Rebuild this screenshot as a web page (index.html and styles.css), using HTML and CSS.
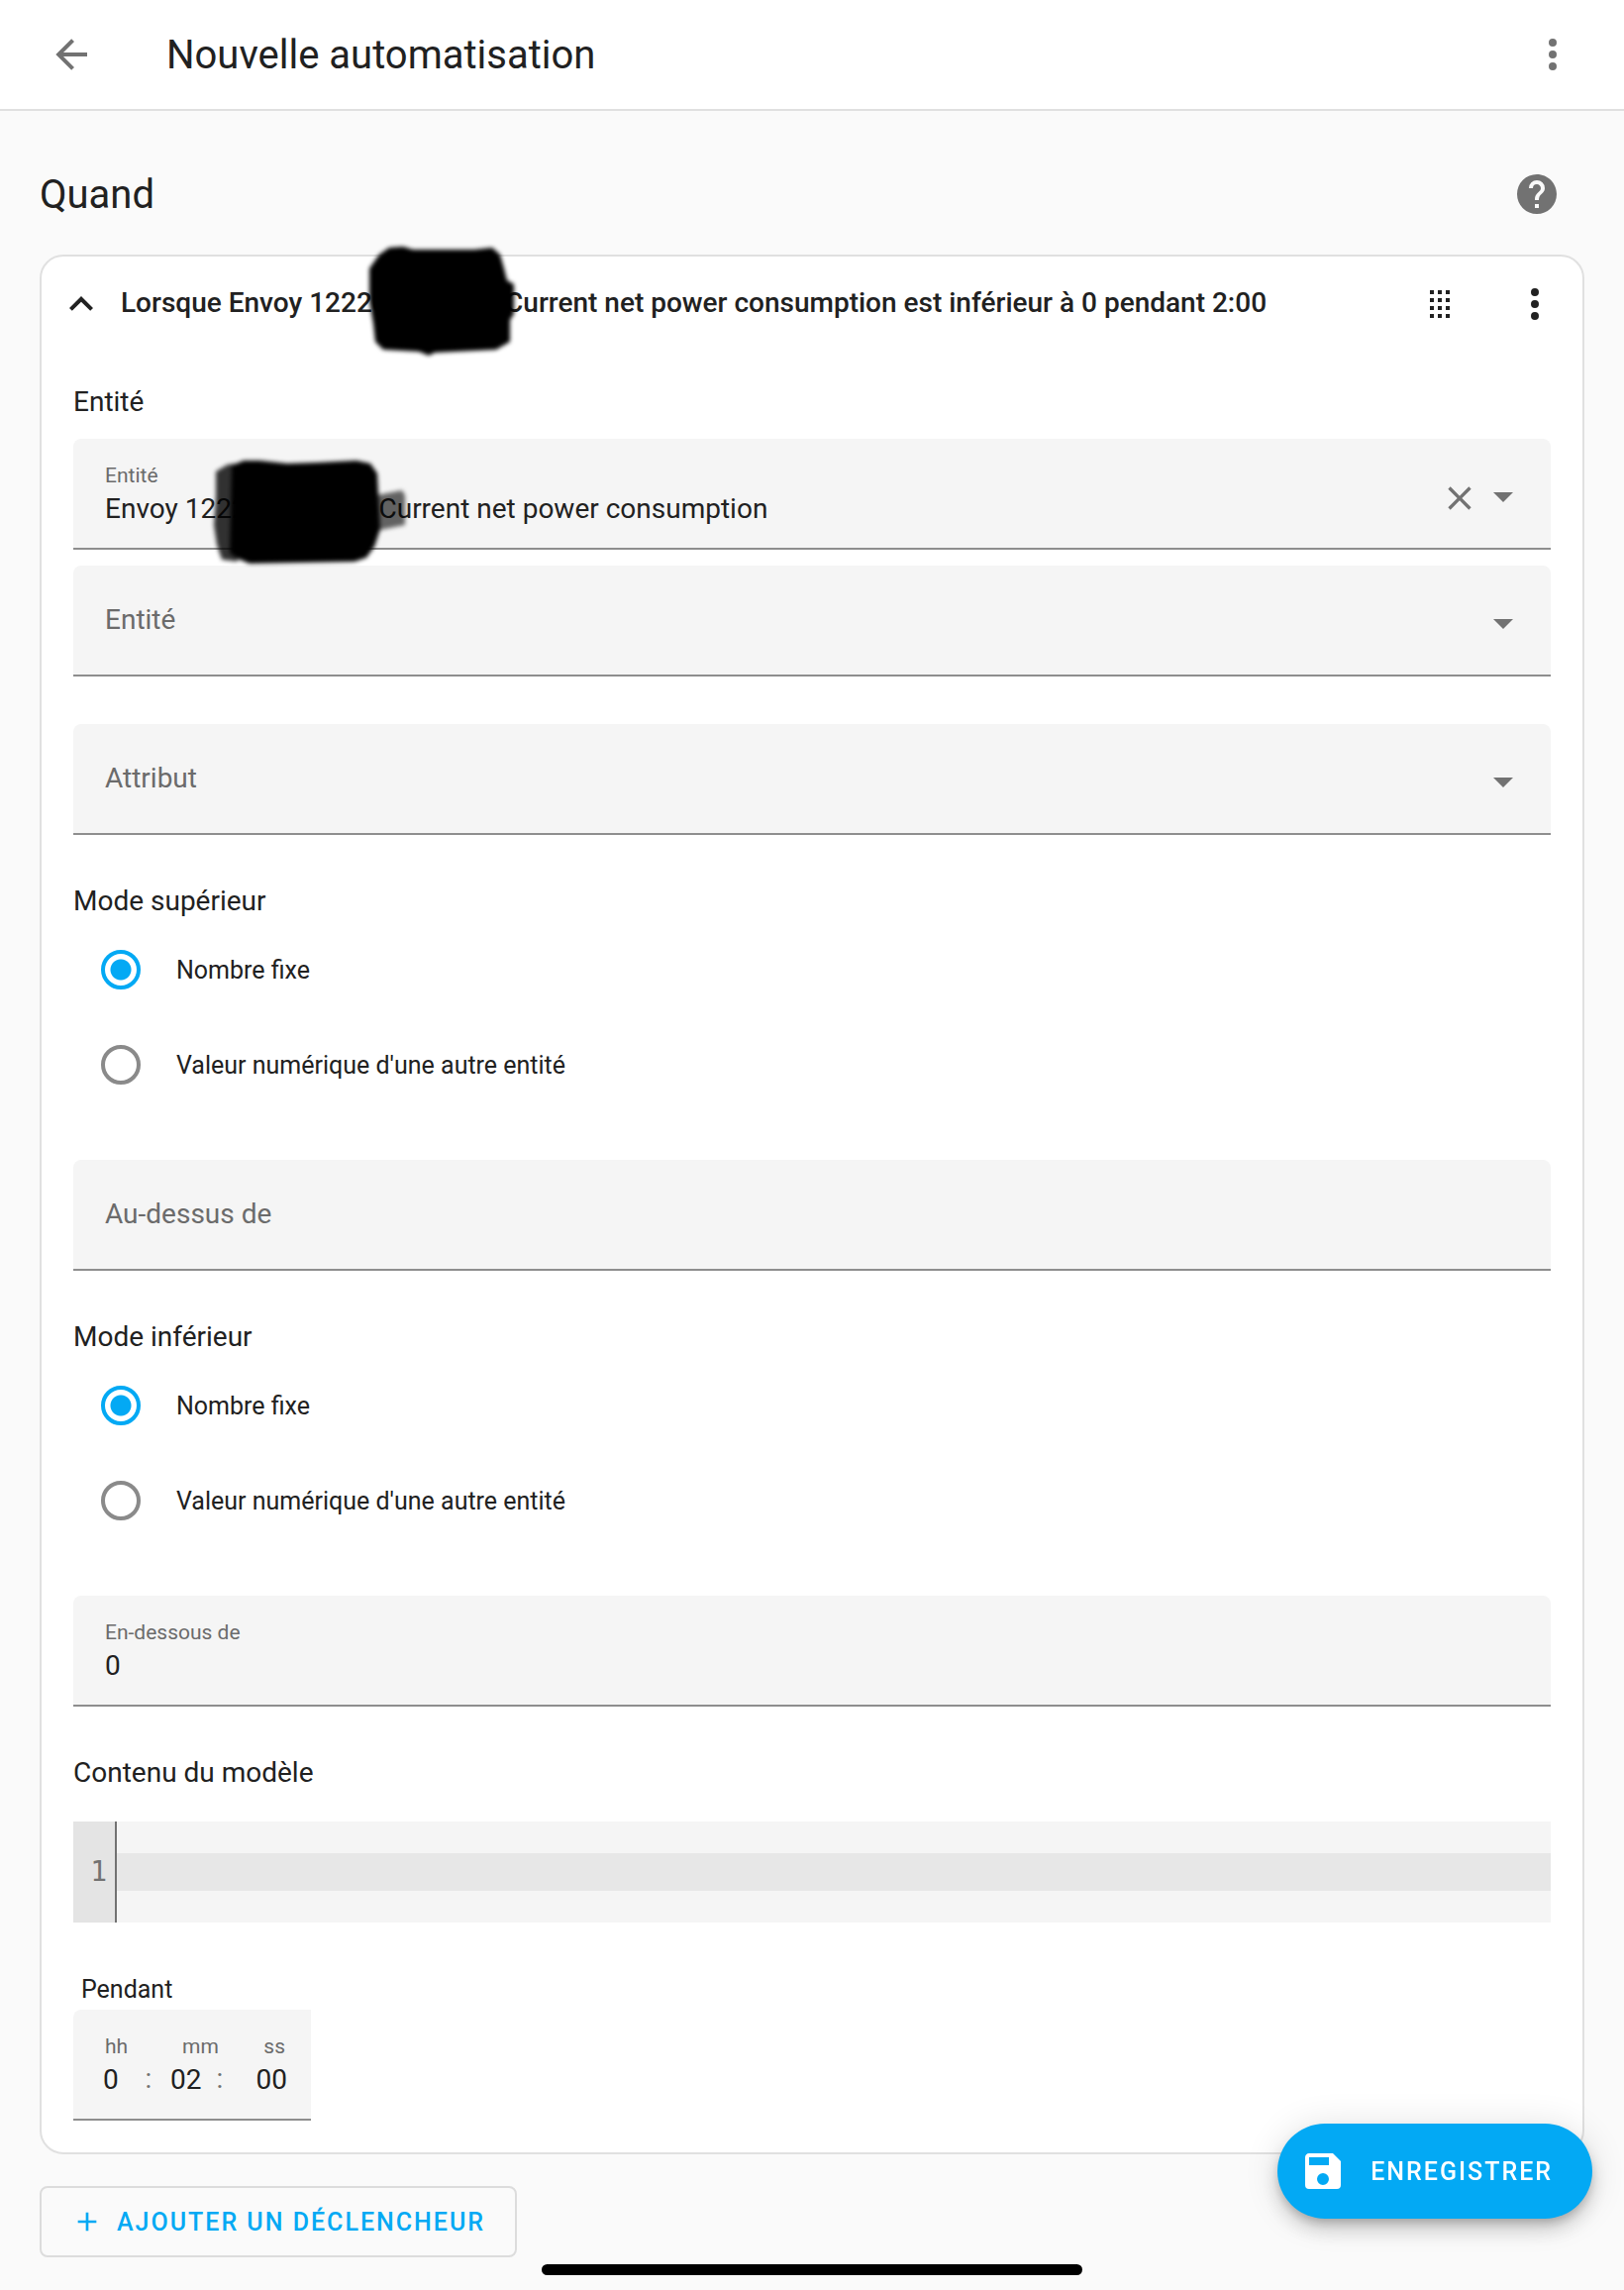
FILE: index.html
```html
<!DOCTYPE html>
<html lang="fr">

<head>
    <meta charset="UTF-8">
    <meta name="viewport" content="width=device-width, initial-scale=1.0">
    <title>Nouvelle automatisation</title>
    <link rel="stylesheet" href="styles.css">
</head>

<body>
    <header class="toolbar">
        <button class="icon-button" type="button" aria-label="Retour">
            <svg class="icon" viewBox="0 0 24 24"><path d="M20,11V13H8L13.5,18.5L12.08,19.92L4.16,12L12.08,4.08L13.5,5.5L8,11H20Z"/></svg>
        </button>
        <h1 class="toolbar-title">Nouvelle automatisation</h1>
        <button class="icon-button" type="button" aria-label="Menu">
            <svg class="icon" viewBox="0 0 24 24"><path d="M12,16A2,2 0 0,1 14,18A2,2 0 0,1 12,20A2,2 0 0,1 10,18A2,2 0 0,1 12,16M12,10A2,2 0 0,1 14,12A2,2 0 0,1 12,14A2,2 0 0,1 10,12A2,2 0 0,1 12,10M12,4A2,2 0 0,1 14,6A2,2 0 0,1 12,8A2,2 0 0,1 10,6A2,2 0 0,1 12,4Z"/></svg>
        </button>
    </header>

    <main class="content">
        <div class="section-header">
            <h2>Quand</h2>
            <button class="icon-button" type="button" aria-label="Aide">
                <svg class="icon" viewBox="0 0 24 24"><path d="M15.07,11.25L14.17,12.17C13.45,12.89 13,13.5 13,15H11V14.5C11,13.39 11.45,12.39 12.17,11.67L13.41,10.41C13.78,10.05 14,9.55 14,9C14,7.89 13.1,7 12,7A2,2 0 0,0 10,9H8A4,4 0 0,1 12,5A4,4 0 0,1 16,9C16,9.88 15.64,10.67 15.07,11.25M13,19H11V17H13M12,2A10,10 0 0,0 2,12A10,10 0 0,0 12,22A10,10 0 0,0 22,12C22,6.47 17.5,2 12,2Z"/></svg>
            </button>
        </div>

        <section class="card">
            <div class="card-header">
                <button class="icon-button" type="button" aria-label="Réduire">
                    <svg class="icon" viewBox="0 0 24 24"><path d="M7.41,15.41L12,10.83L16.59,15.41L18,14L12,8L6,14L7.41,15.41Z"/></svg>
                </button>
                <h3>Lorsque Envoy 1222<span class="masked">00000000<svg class="scribble scribble-title" viewBox="0 0 200 130"><path d="M44,13L58,12L68,15L130,15L148,13L156,20L160,34L163,46L170,50L170,80L166,86L166,108L152,116L90,119L84,122L74,118L38,116L30,108L28,90L24,66L24,34L34,20Z"/></svg></span> Current net power consumption est inférieur à 0 pendant 2:00</h3>
                <button class="icon-button" type="button" aria-label="Déplacer">
                    <svg class="icon" viewBox="0 0 24 24"><path d="M7,19V17H9V19H7M11,19V17H13V19H11M15,19V17H17V19H15M7,15V13H9V15H7M11,15V13H13V15H11M15,15V13H17V15H15M7,11V9H9V11H7M11,11V9H13V11H11M15,11V9H17V11H15M7,7V5H9V7H7M11,7V5H13V7H11M15,7V5H17V7H15Z"/></svg>
                </button>
                <button class="icon-button" type="button" aria-label="Actions">
                    <svg class="icon" viewBox="0 0 24 24"><path d="M12,16A2,2 0 0,1 14,18A2,2 0 0,1 12,20A2,2 0 0,1 10,18A2,2 0 0,1 12,16M12,10A2,2 0 0,1 14,12A2,2 0 0,1 12,14A2,2 0 0,1 10,12A2,2 0 0,1 12,10M12,4A2,2 0 0,1 14,6A2,2 0 0,1 12,8A2,2 0 0,1 10,6A2,2 0 0,1 12,4Z"/></svg>
                </button>
            </div>

            <form class="card-body" id="trigger-form">
                <div class="entities" role="group" aria-labelledby="entities-label">
                    <p class="group-label" id="entities-label">Entité</p>
                    <div class="field">
                        <label for="entity">Entité</label>
                        <select id="entity">
                            <option>Envoy 122200000000 Current net power consumption</option>
                        </select>
                        <svg class="scribble scribble-field" viewBox="0 0 220 130"><path class="faint" d="M180,50L206,45L209,50L209,80L184,85Z"/><path class="soft" d="M18,26L30,19L40,18L40,117L24,115L19,100L16,80L18,52Z"/><path d="M34,20L46,15L62,15L90,18L120,17L160,15L174,18L181,28L182,48L184,84L178,102L170,113L158,117L52,119L40,114L32,108Z"/></svg>
                        <div class="field-icons">
                            <button class="clear" type="button" aria-label="Effacer">
                                <svg viewBox="0 0 24 24"><path d="M19,6.41L17.59,5L12,10.59L6.41,5L5,6.41L10.59,12L5,17.59L6.41,19L12,13.41L17.59,19L19,17.59L13.41,12L19,6.41Z"/></svg>
                            </button>
                            <svg class="icon" viewBox="0 0 24 24"><path d="M7,10L12,15L17,10H7Z"/></svg>
                        </div>
                    </div>
                    <div class="field empty">
                        <select aria-label="Entité">
                            <option>Entité</option>
                        </select>
                        <div class="field-icons">
                            <svg class="icon" viewBox="0 0 24 24"><path d="M7,10L12,15L17,10H7Z"/></svg>
                        </div>
                    </div>
                </div>

                <div class="field empty">
                    <select aria-label="Attribut">
                        <option>Attribut</option>
                    </select>
                    <div class="field-icons">
                        <svg class="icon" viewBox="0 0 24 24"><path d="M7,10L12,15L17,10H7Z"/></svg>
                    </div>
                </div>

                <div role="radiogroup" aria-labelledby="above-label">
                    <p class="group-label" id="above-label">Mode supérieur</p>
                    <div class="radios">
                        <label class="radio"><input type="radio" name="above" checked>Nombre fixe</label>
                        <label class="radio"><input type="radio" name="above">Valeur numérique d'une autre entité</label>
                    </div>
                </div>

                <div class="field empty">
                    <input type="text" inputmode="decimal" placeholder="Au-dessus de" aria-label="Au-dessus de">
                </div>

                <div role="radiogroup" aria-labelledby="below-label">
                    <p class="group-label" id="below-label">Mode inférieur</p>
                    <div class="radios">
                        <label class="radio"><input type="radio" name="below" checked>Nombre fixe</label>
                        <label class="radio"><input type="radio" name="below">Valeur numérique d'une autre entité</label>
                    </div>
                </div>

                <div class="field">
                    <label for="below">En-dessous de</label>
                    <input id="below" type="text" inputmode="decimal" value="0">
                </div>

                <div class="template">
                    <label class="group-label" for="template">Contenu du modèle</label>
                    <div class="editor">
                        <div class="gutter">1</div>
                        <textarea id="template" rows="1"></textarea>
                    </div>
                </div>

                <fieldset class="duration">
                    <legend>Pendant</legend>
                    <div class="duration-fields">
                        <div class="unit hours">
                            <label for="hours">hh</label>
                            <input id="hours" type="text" value="0">
                        </div>
                        <span class="colon">:</span>
                        <div class="unit minutes">
                            <label for="minutes">mm</label>
                            <input id="minutes" type="text" value="02">
                        </div>
                        <span class="colon">:</span>
                        <div class="unit seconds">
                            <label for="seconds">ss</label>
                            <input id="seconds" type="text" value="00">
                        </div>
                    </div>
                </fieldset>
            </form>
        </section>

        <button class="add" type="button">
            <svg viewBox="0 0 24 24"><path d="M19,13H13V19H11V13H5V11H11V5H13V11H19V13Z"/></svg>
            Ajouter un déclencheur
        </button>
    </main>

    <button class="save" type="submit" form="trigger-form">
        <svg class="icon" viewBox="0 0 24 24"><path d="M15,9H5V5H15M12,19A3,3 0 0,1 9,16A3,3 0 0,1 12,13A3,3 0 0,1 15,16A3,3 0 0,1 12,19M17,3H5C3.89,3 3,3.9 3,5V19A2,2 0 0,0 5,21H19A2,2 0 0,0 21,19V7L17,3Z"/></svg>
        Enregistrer
    </button>
    <div class="home-indicator"></div>
</body>

</html>
```

FILE: styles.css
```css
* {
    box-sizing: border-box;
}

body {
    margin: 0;
    background-color: #fafafa;
    color: #212121;
    font-family: Roboto, sans-serif;
    font-size: 28px;
}

h1,
h2,
h3,
p {
    margin: 0;
    font-weight: 400;
}

button,
input,
select,
textarea {
    margin: 0;
    padding: 0;
    border: none;
    border-radius: 0;
    outline: none;
    background: transparent;
    color: inherit;
    font: inherit;
    appearance: none;
}

button {
    cursor: pointer;
}

svg {
    display: block;
    flex: none;
    fill: currentColor;
}

.icon {
    width: 48px;
    height: 48px;
}

.icon-button {
    display: flex;
    flex: none;
    color: #727272;
}

/* Top bar */

.toolbar {
    display: flex;
    align-items: center;
    height: 112px;
    padding: 0 48px;
    background-color: #fff;
    border-bottom: 2px solid #e0e0e0;
}

.toolbar-title {
    flex: 1;
    padding-left: 72px;
    font-size: 40px;
}

.content {
    padding: 48px 40px 32px;
}

.section-header {
    display: flex;
    align-items: center;
    justify-content: space-between;
    height: 72px;
    margin-bottom: 25px;
    padding-right: 24px;
}

.section-header h2 {
    font-size: 40px;
}

/* Trigger card */

.card {
    background-color: #fff;
    border: 2px solid #e0e0e0;
    border-radius: 24px;
}

.card-header {
    display: flex;
    align-items: center;
    height: 96px;
    padding: 0 24px 0 16px;
}

.card-header .icon-button {
    color: #212121;
}

.card-header .icon-button + .icon-button {
    margin-left: 48px;
}

.card-header h3 {
    flex: 1;
    padding: 0 0 4px 16px;
    font-size: 28px;
    font-weight: 500;
}

.card-body {
    display: flex;
    flex-direction: column;
    gap: 48px;
    padding: 32px;
}

.group-label {
    display: block;
    line-height: 38px;
}

.entities {
    display: flex;
    flex-direction: column;
    gap: 16px;
}

.entities .group-label {
    margin-bottom: 2px;
}

/* Filled fields */

.field {
    position: relative;
    display: flex;
    flex-direction: column;
    height: 112px;
    padding: 24px 32px 0;
    background-color: #f5f5f5;
    border-bottom: 2px solid #8e8e8e;
    border-radius: 8px 8px 0 0;
}

.field label,
.unit label {
    color: #6b6b6b;
    font-size: 21px;
    line-height: 26px;
}

.field input,
.field select {
    width: 100%;
    height: 40px;
}

.field.empty {
    padding: 0 32px 2px;
}

.field.empty input,
.field.empty select {
    height: 100%;
    color: #6b6b6b;
}

.field input::placeholder {
    color: #6b6b6b;
    opacity: 1;
}

.field-icons {
    position: absolute;
    top: 34px;
    right: 24px;
    display: flex;
    align-items: center;
    color: #727272;
    pointer-events: none;
}

.clear {
    padding-top: 4px;
    pointer-events: auto;
}

.clear svg {
    width: 40px;
    height: 40px;
}

/* Marker strokes over the serial number */

.masked {
    position: relative;
}

.scribble {
    position: absolute;
    fill: #000;
    filter: blur(2px);
    pointer-events: none;
}

.scribble-title {
    top: -52px;
    left: -27px;
    width: 200px;
    height: 130px;
}

.scribble-field {
    top: 7px;
    left: 126px;
    width: 220px;
    height: 130px;
    z-index: 1;
}

.scribble .faint {
    opacity: 0.6;
}

.scribble .soft {
    opacity: 0.8;
}

/* Radios */

.radios {
    padding-top: 2px;
}

.radio {
    display: flex;
    align-items: center;
    gap: 36px;
    height: 96px;
    padding-left: 28px;
    font-size: 25px;
}

.radio input {
    width: 40px;
    height: 40px;
    border: 4px solid #8a8a8a;
    border-radius: 50%;
}

.radio input:checked {
    border-color: #03a9f4;
    background: radial-gradient(circle, #03a9f4 10px, transparent 11px);
}

/* Template editor */

.template {
    display: flex;
    flex-direction: column;
    gap: 30px;
}

.editor {
    display: flex;
    background-color: #f5f5f5;
    font-family: "DejaVu Sans Mono", monospace;
    font-size: 28px;
    line-height: 38px;
}

.gutter {
    width: 44px;
    padding: 32px 8px 32px 0;
    background-color: #e4e4e4;
    border-right: 2px solid #727272;
    color: #727272;
    text-align: right;
}

.editor textarea {
    flex: 1;
    height: 38px;
    margin: 32px 0;
    background-color: #e7e7e7;
    resize: none;
    overflow: hidden;
}

/* Duration */

.duration {
    margin: 0;
    padding: 0;
    border: none;
}

.duration legend {
    padding: 0 8px;
    font-size: 25px;
    line-height: 40px;
}

.duration-fields {
    display: flex;
    width: 240px;
    height: 112px;
    padding: 24px 24px 0 30px;
    background-color: #f5f5f5;
    border-bottom: 2px solid #8e8e8e;
    border-radius: 8px 0 0 0;
}

.unit {
    display: flex;
    flex-direction: column;
}

.unit input {
    width: 100%;
    height: 40px;
}

.hours {
    width: 42px;
}

.hours label {
    padding-left: 2px;
}

.minutes {
    width: 46px;
    margin-left: 18px;
}

.minutes label {
    padding-left: 12px;
}

.seconds {
    width: 34px;
    margin-left: auto;
    text-align: right;
}

.seconds label {
    padding-right: 2px;
}

.seconds input {
    text-align: right;
}

.colon {
    width: 8px;
    padding-top: 26px;
    color: #727272;
    line-height: 40px;
    text-align: center;
}

/* Buttons */

.add,
.save {
    display: flex;
    align-items: center;
    font-size: 25px;
    font-weight: 500;
    letter-spacing: 2px;
    text-transform: uppercase;
}

.add {
    gap: 14px;
    height: 72px;
    margin-top: 32px;
    padding: 0 30px;
    border: 2px solid #dcdcdc;
    border-radius: 8px;
    color: #03a9f4;
}

.add svg {
    width: 32px;
    height: 32px;
}

.save {
    position: fixed;
    right: 32px;
    bottom: 72px;
    gap: 24px;
    height: 96px;
    padding: 0 40px 0 22px;
    border-radius: 48px;
    background-color: #03a9f4;
    box-shadow: 0 6px 10px -2px rgba(0, 0, 0, 0.2), 0 12px 20px rgba(0, 0, 0, 0.14), 0 2px 36px rgba(0, 0, 0, 0.12);
    color: #fff;
}

.home-indicator {
    position: fixed;
    bottom: 15px;
    left: 50%;
    width: 546px;
    height: 11px;
    margin-left: -273px;
    border-radius: 6px;
    background-color: #000;
}
```
